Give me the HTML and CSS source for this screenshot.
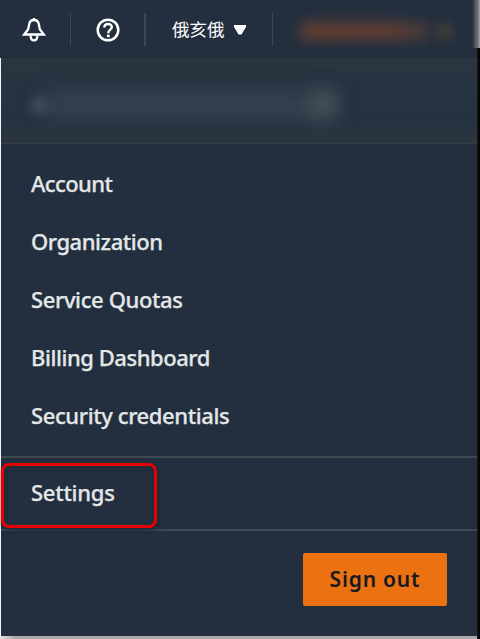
FILE: index.html
```html
<!DOCTYPE html>
<html lang="en">
<head>
<meta charset="utf-8">
<title>Account menu</title>
<link rel="stylesheet" href="styles.css">
</head>
<body>
<div class="screen">
  <header class="topbar">
    <div class="cell bell">
      <svg width="26" height="26" viewBox="0 0 26 26" fill="none" stroke="#fff" stroke-width="2.3" stroke-linejoin="miter">
        <path d="M3.2 17.5L7.2 12.2L8.3 6.6C8.9 4.3 10.6 3 13 3S17.1 4.3 17.7 6.6L18.8 12.2L22.8 17.5Z"/>
        <path d="M13 1V3M9.6 18.5C9.6 25 16.4 25 16.4 18.5"/>
      </svg>
    </div>
    <div class="cell help">
      <svg width="24" height="24" viewBox="0 0 24 24" fill="none" stroke="#fff">
        <circle cx="12" cy="12" r="10.3" stroke-width="2.5"/>
        <path d="M8.3 9.5C8.3 4.8 15.8 5 15.8 9C15.8 11.7 12.3 11.5 12.3 15.2" stroke-width="2.4"/>
        <path d="M12.3 16.6V19.2" stroke-width="2.8"/>
      </svg>
    </div>
    <div class="cell region"><span lang="zh">俄亥俄</span>
      <svg width="12" height="10" viewBox="0 0 12 10" fill="#fff"><path d="M0 0H12V2L7.5 9.5H4.5L0 2Z"/></svg>
    </div>
    <div class="user"><span class="user-name"></span><span class="user-caret"></span></div>
  </header>
  <main class="menu">
    <section class="identity"><span class="smudge-dot"></span><span class="smudge"></span><span class="smudge-end"></span></section>
    <nav class="links">
      <a><span class="account">Account</span></a>
      <a><span class="organization">Organization</span></a>
      <a><span class="quotas">Service Quotas</span></a>
      <a><span class="billing">Billing Dashboard</span></a>
      <a><span class="security">Security credentials</span></a>
    </nav>
    <section class="settings"><a><span class="settings-label">Settings</span></a><i class="marker"></i></section>
    <footer class="actions"><button>Sign out</button></footer>
  </main>
  <i class="edge-top"></i><i class="edge"></i>
</div>
</body>
</html>
```

FILE: styles.css
```css
* { box-sizing: border-box; }
body { margin: 0; background: #fff; font-family: "Noto Sans", "Noto Sans CJK SC", sans-serif; }
.screen { position: relative; width: 480px; height: 639px; overflow: hidden; background: linear-gradient(90deg, #e4e4e4, #aaa 15px) 0 636px / 100% 3px no-repeat, #f5f5f5; }
.topbar { display: flex; width: 480px; height: 58px; padding-top: 13px; background: #232f3e; }
.cell { display: flex; height: 33px; align-items: center; border-right: 1px solid #414750; }
.bell { width: 71px; padding-left: 21px; }
.bell svg { margin-top: 1px; }
.help { width: 75px; padding-left: 25px; border-right-width: 2px; }
.help svg { margin-top: 1px; }
.region { width: 127px; padding-left: 26px; color: #fff; font: 17.5px/24px "Noto Sans CJK SC", sans-serif; }
.region span { margin-top: -2px; }
.region svg { margin: 0 0 0 9px; }
.user { display: flex; align-items: center; height: 36px; padding-left: 27px; gap: 8px; }
.user-name { width: 132px; height: 16px; border-radius: 7px; background: linear-gradient(90deg, #6e402f, #683e31 70%, #403a3d); filter: blur(7px); }
.user-caret { width: 10px; height: 13px; background: #5a4534; filter: blur(6px); }
.menu { display: flex; flex-direction: column; width: 476px; height: 578px; margin-left: 1px; background: #232f3e; }
.identity { position: relative; height: 86px; overflow: hidden; border-bottom: 1px solid #353f4a; background: linear-gradient(#2b3640, #263340 24px, #253240 62px, #2b3640); }
.smudge, .smudge-dot, .smudge-end { position: absolute; }
.smudge { left: 40px; top: 34px; width: 296px; height: 26px; border-radius: 12px; background: #35424f; filter: blur(10px); }
.smudge-dot { z-index: 1; left: 32px; top: 41px; width: 12px; height: 12px; background: #4e5a68; filter: blur(6px); }
.smudge-end { z-index: 1; left: 309px; top: 33px; width: 26px; height: 26px; background: #465059; filter: blur(9px); }
.links { height: 314px; padding-top: 10px; border-bottom: 2px solid #414750; }
a { display: flex; height: 58px; align-items: center; padding-left: 30px; color: #e3e7e8; font-size: 22px; font-weight: 500; line-height: 30px; white-space: nowrap; -webkit-text-stroke: .25px #e3e7e8; }
.account { letter-spacing: -.6px; }
.organization { letter-spacing: -.45px; }
.quotas { letter-spacing: -.38px; }
.billing { letter-spacing: -.45px; }
.security { letter-spacing: -.4px; }
.settings-label { letter-spacing: -.25px; }
.settings { position: relative; height: 73px; padding-top: 5px; border-bottom: 2px solid #414750; }
.marker { position: absolute; left: 0; top: 5px; width: 156px; height: 65px; border: 3px solid #e60006; border-radius: 8px; box-shadow: 1px 2px 5px #1b2532, inset 1px 2px 7px #1e2a37; }
.actions { display: flex; justify-content: flex-end; padding: 22px 30px 0 0; }
button { width: 144px; height: 53px; padding: 0; border: 0; border-radius: 2px; background: #ec7211; color: #16191f; font: 600 21px/53px "Noto Sans", sans-serif; letter-spacing: .8px; }
.edge, .edge-top { position: absolute; right: 0; }
.edge { top: 48px; bottom: 0; width: 3px; background: linear-gradient(90deg, #171717, #000); }
.edge-top { top: 0; width: 8px; height: 48px; background: linear-gradient(90deg, transparent, #777b80 80%, #aaa); }
```
